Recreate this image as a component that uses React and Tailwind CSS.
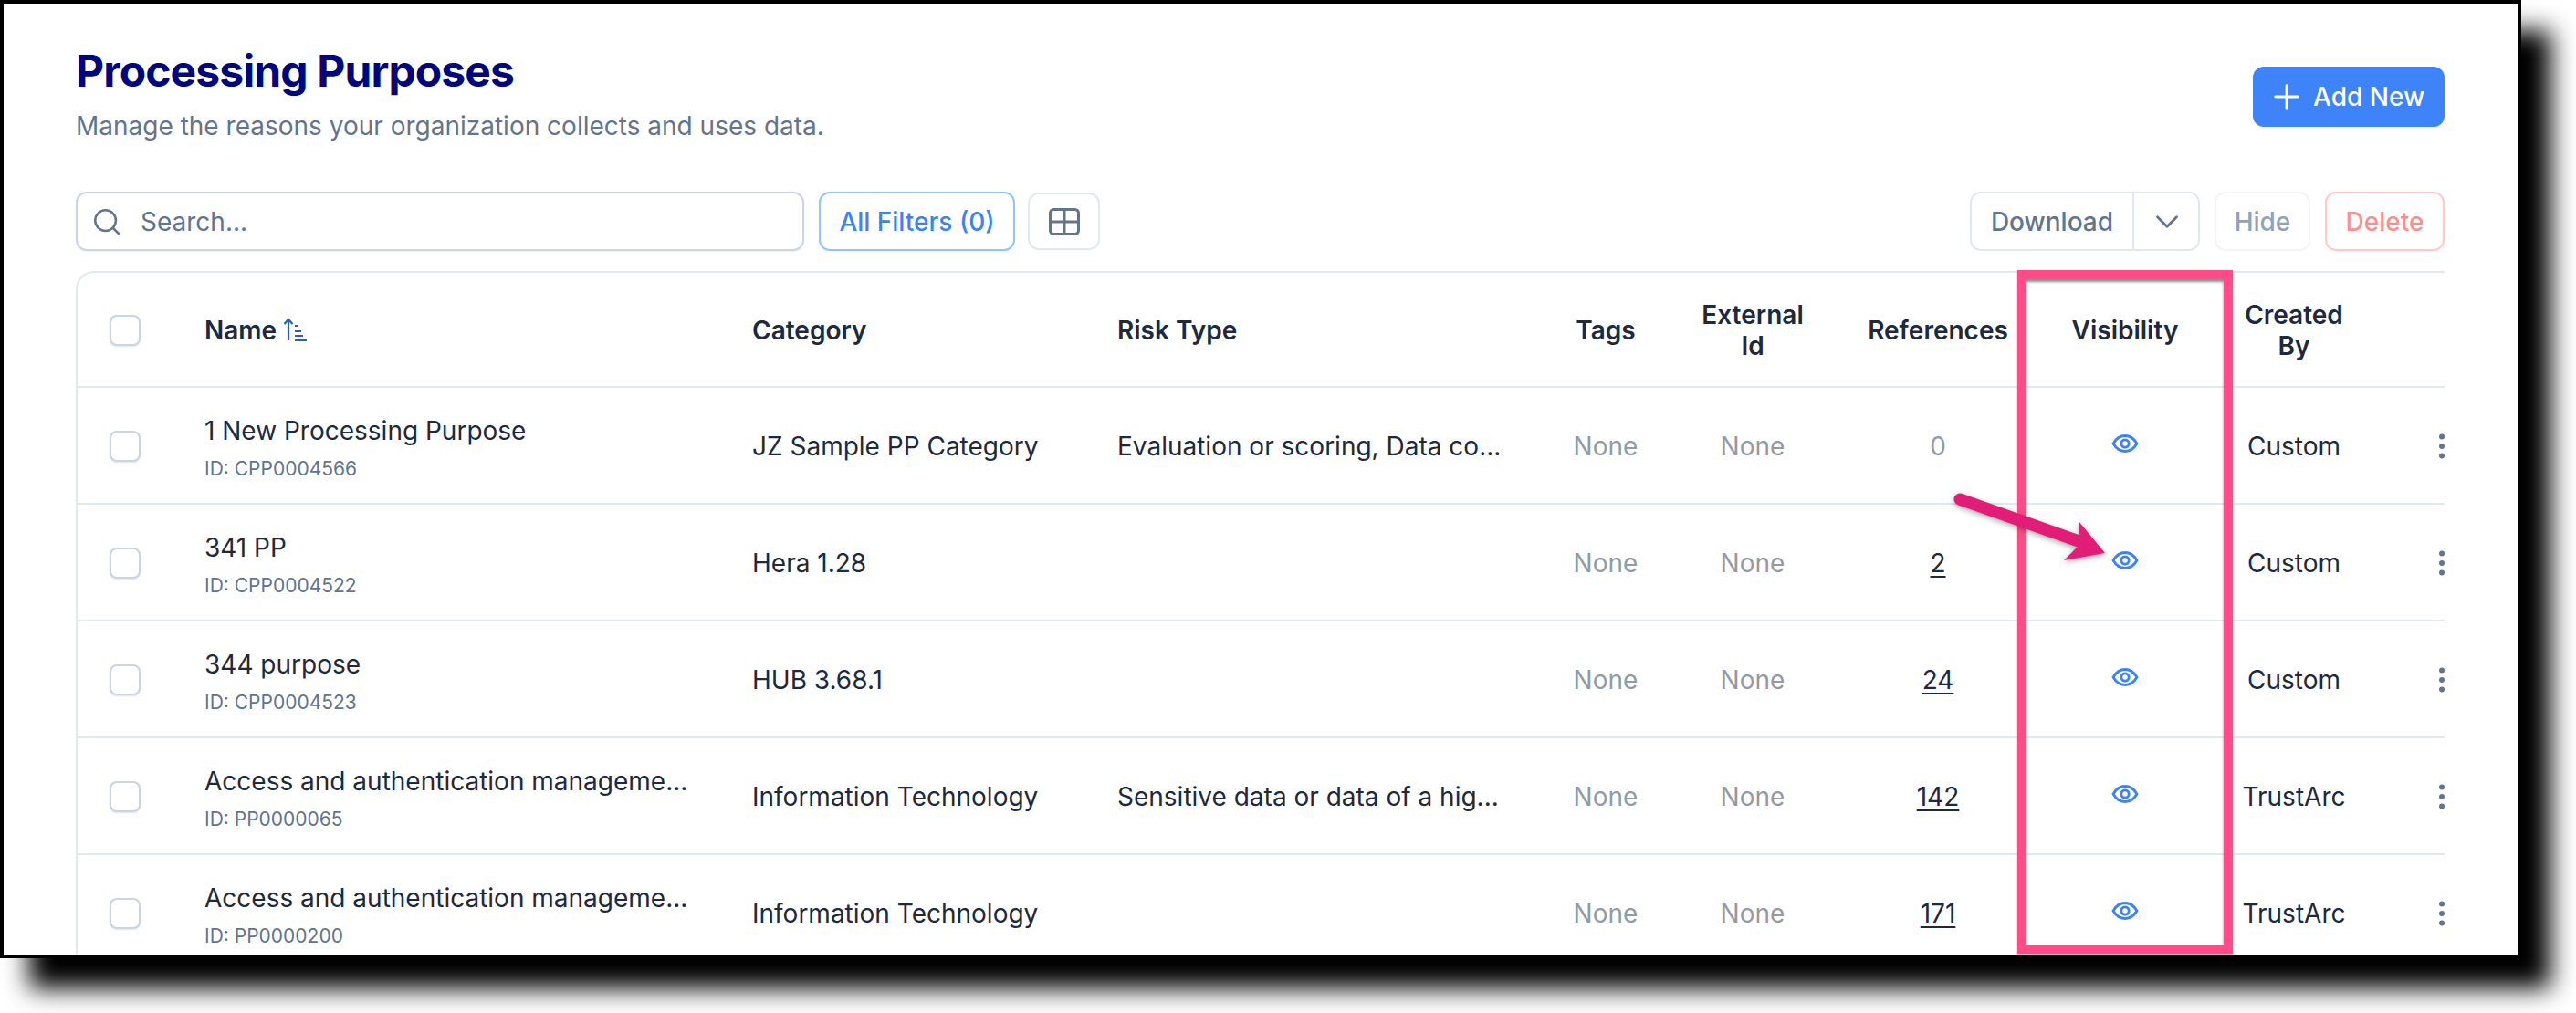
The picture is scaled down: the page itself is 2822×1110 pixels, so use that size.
import React from 'react';
import { Search, Plus, ChevronDown, EllipsisVertical } from 'lucide-react';

const COLS = 'grid grid-cols-[107px_600px_400px_504px_126px_196px_210px_200px_170px_80px] items-center';

const rows = [
  { name: '1 New Processing Purpose', id: 'CPP0004566', category: 'JZ Sample PP Category', risk: 'Evaluation or scoring, Data co...', refs: '0', by: 'Custom' },
  { name: '341 PP', id: 'CPP0004522', category: 'Hera 1.28', risk: '', refs: '2', by: 'Custom' },
  { name: '344 purpose', id: 'CPP0004523', category: 'HUB 3.68.1', risk: '', refs: '24', by: 'Custom' },
  { name: 'Access and authentication manageme...', id: 'PP0000065', category: 'Information Technology', risk: 'Sensitive data or data of a hig...', refs: '142', by: 'TrustArc' },
  { name: 'Access and authentication manageme...', id: 'PP0000200', category: 'Information Technology', risk: '', refs: '171', by: 'TrustArc' },
];

const Checkbox = () => (
  <div className="ml-[35px] w-[34px] h-[34px] rounded-[8px] border-2 border-slate-300 bg-white shadow-[0_1px_2px_rgba(15,23,42,0.12)]" />
);

const EyeIcon = () => (
  <svg width="32" height="24" viewBox="0 0 32 24" fill="none" stroke="#3b82f6" strokeWidth="2.8" className="-mt-[6px]">
    <path d="M3 12C6.5 6 11 3.5 16 3.5S25.5 6 29 12C25.5 18 21 20.5 16 20.5S6.5 18 3 12Z" strokeLinejoin="round" />
    <circle cx="16" cy="12" r="4.2" />
  </svg>
);

const SortIcon = () => (
  <svg width="26" height="26" viewBox="0 0 26 26" fill="none" stroke="#2b5fb8" strokeWidth="2.2" className="ml-[7px] -mt-[2px]">
    <path d="M6 25V2M1.5 7 6 2l4.5 5" />
    <path d="M13 9h3M13 15h7M13 20h9M13 25h13" />
  </svg>
);

const TableIcon = () => (
  <svg width="34" height="30" viewBox="0 0 34 30" fill="none" stroke="#64748b" strokeWidth="3">
    <rect x="1.5" y="1.5" width="31" height="27" rx="4" />
    <path d="M17 2v26M2 15h30" />
  </svg>
);

export default function App() {
  return (
    <div className="w-[2822px] h-[1110px] bg-white overflow-hidden font-['Inter',sans-serif]">
      <div className="relative w-[2762px] h-[1050px] border-4 border-black bg-white overflow-hidden shadow-[32px_33px_26px_#000]">
        <div className="pt-[46px] pl-[79px] pr-[80px]">
          {/* Header */}
          <div className="flex items-start justify-between">
            <div>
              <h1 className="text-[48px] leading-[56px] font-bold tracking-[-0.9px] text-[#00077c]">Processing Purposes</h1>
              <p className="mt-[12px] text-[28px] leading-[40px] text-slate-500">Manage the reasons your organization collects and uses data.</p>
            </div>
            <button className="mt-[23px] flex items-center gap-[8px] h-[66px] w-[210px] pl-[16px] rounded-[12px] bg-[#3f83f8] text-white text-[28px] font-medium">
              <Plus size={42} strokeWidth={1.6} />
              Add New
            </button>
          </div>

          {/* Toolbar */}
          <div className="mt-[52px] flex items-center h-[65px]">
            <div className="flex items-center w-[798px] h-[65px] pl-[15px] rounded-[12px] border-2 border-slate-300 shadow-[0_1px_2px_rgba(15,23,42,0.08)]">
              <Search size={34} strokeWidth={1.8} className="text-slate-500" />
              <span className="ml-[20px] text-[28px] text-slate-500">Search...</span>
            </div>
            <button className="ml-[16px] w-[215px] h-[65px] rounded-[12px] border-2 border-blue-300 text-[#3b82f6] text-[28px] font-medium">All Filters (0)</button>
            <button className="ml-[14px] w-[79px] h-[63px] flex items-center justify-center rounded-[12px] border-2 border-slate-200"><TableIcon /></button>
            <div className="ml-auto flex items-center h-[65px] w-[252px] rounded-[12px] border-2 border-slate-200">
              <span className="w-[178px] text-center text-[28px] font-medium text-slate-500 border-r-2 border-slate-200 leading-[61px] pt-[2px]">Download</span>
              <ChevronDown size={42} strokeWidth={1.6} className="ml-[15px] text-slate-500" />
            </div>
            <button className="ml-[16px] w-[105px] h-[65px] rounded-[12px] border-2 border-slate-100 text-[28px] font-medium text-slate-400">Hide</button>
            <button className="ml-[16px] w-[131px] h-[65px] rounded-[12px] border-2 border-red-200 text-[28px] font-medium text-[#fb8f8f]">Delete</button>
          </div>

          {/* Table */}
          <div className="mt-[22px] border-t-2 border-l-2 border-slate-200 rounded-tl-[20px]">
            <div className={`${COLS} h-[126px] pt-[2px] border-b-2 border-slate-200 text-[28px] leading-[34px] font-semibold text-slate-800`}>
              <Checkbox />
              <div className="pl-[32px] flex items-center">Name<SortIcon /></div>
              <div className="pl-[32px]">Category</div>
              <div className="pl-[32px]">Risk Type</div>
              <div className="text-center">Tags</div>
              <div className="text-center px-[40px]">External Id</div>
              <div className="text-center">References</div>
              <div className="text-center">Visibility</div>
              <div className="text-center px-[30px]">Created By</div>
              <div />
            </div>
            {rows.map((row) => (
              <div key={row.id} className={`${COLS} h-[128px] pt-[2px] border-b-2 border-slate-200 text-[28px] text-slate-800`}>
                <Checkbox />
                <div className="pl-[32px] pt-[3px]">
                  <div className="leading-[38px] whitespace-nowrap">{row.name}</div>
                  <div className="mt-[8px] text-[21px] leading-[30px] text-slate-500">ID: {row.id}</div>
                </div>
                <div className="pl-[32px] whitespace-nowrap">{row.category}</div>
                <div className="pl-[32px] whitespace-nowrap">{row.risk}</div>
                <div className="text-center text-[#929aa6]">None</div>
                <div className="text-center text-[#929aa6]">None</div>
                <div className={row.refs === '0' ? 'text-center text-[#929aa6]' : 'text-center underline underline-offset-[4px]'}>{row.refs}</div>
                <div className="flex justify-center"><EyeIcon /></div>
                <div className="text-center">{row.by}</div>
                <div className="flex justify-end"><EllipsisVertical size={36} className="-mr-[15px] text-slate-500" /></div>
              </div>
            ))}
          </div>
        </div>

        {/* Annotation box around the Visibility column */}
        <div className="absolute left-[2206px] top-[292px] w-[236px] h-[749px] border-[10px] border-[#ff4b87] shadow-[inset_0_3px_3px_rgba(0,0,0,0.45),0_1px_3px_rgba(0,0,0,0.25)]" />

        {/* Annotation arrow */}
        <svg width="190" height="100" viewBox="0 0 190 100" fill="#e21d78" className="absolute left-[2126px] top-[526px] drop-shadow-[0_2px_3px_rgba(0,0,0,0.35)]">
          <path d="M17 17 150 64" stroke="#e21d78" strokeWidth="13" strokeLinecap="round" />
          <path d="M147 41 176 76 131 84 149 66Z" />
        </svg>
      </div>
    </div>
  );
}
